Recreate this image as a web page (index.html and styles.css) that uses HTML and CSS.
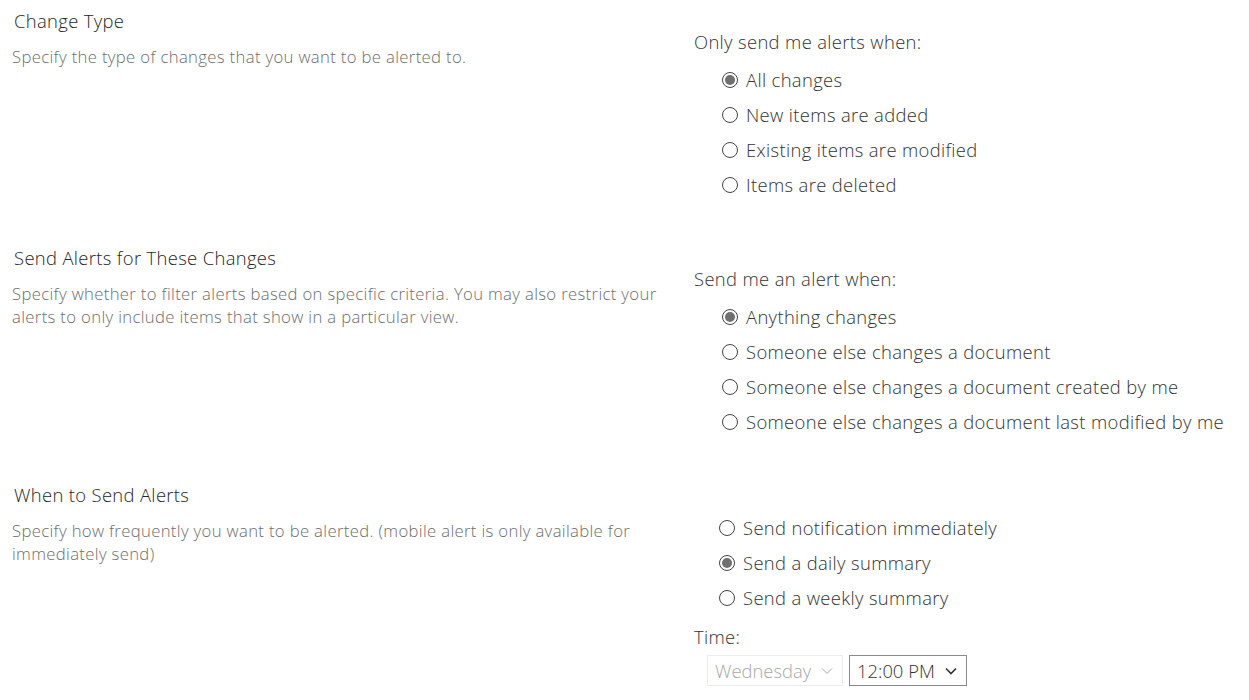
FILE: index.html
```html
<!DOCTYPE html>
<html lang="en">
<head>
<meta charset="utf-8">
<title>Alert settings</title>
<link rel="stylesheet" href="styles.css">
</head>
<body>
<div class="page">
  <section class="section">
    <div class="info">
      <h2 class="title">Change Type</h2>
      <p class="desc">Specify the type of changes that you want to be alerted to.</p>
    </div>
    <div class="control">
      <div class="label">Only send me alerts when:</div>
      <ul class="radios">
        <li class="radio checked"><span class="dot"></span><span>All changes</span></li>
        <li class="radio"><span class="dot"></span><span>New items are added</span></li>
        <li class="radio"><span class="dot"></span><span>Existing items are modified</span></li>
        <li class="radio"><span class="dot"></span><span>Items are deleted</span></li>
      </ul>
    </div>
  </section>

  <section class="section">
    <div class="info">
      <h2 class="title">Send Alerts for These Changes</h2>
      <p class="desc">Specify whether to filter alerts based on specific criteria. You may also restrict your alerts to only include items that show in a particular view.</p>
    </div>
    <div class="control">
      <div class="label">Send me an alert when:</div>
      <ul class="radios">
        <li class="radio checked"><span class="dot"></span><span>Anything changes</span></li>
        <li class="radio"><span class="dot"></span><span>Someone else changes a document</span></li>
        <li class="radio"><span class="dot"></span><span>Someone else changes a document created by me</span></li>
        <li class="radio"><span class="dot"></span><span>Someone else changes a document last modified by me</span></li>
      </ul>
    </div>
  </section>

  <section class="section">
    <div class="info">
      <h2 class="title">When to Send Alerts</h2>
      <p class="desc">Specify how frequently you want to be alerted. (mobile alert is only available for immediately send)</p>
    </div>
    <div class="control control-when">
      <ul class="radios radios-when">
        <li class="radio"><span class="dot"></span><span>Send notification immediately</span></li>
        <li class="radio checked"><span class="dot"></span><span>Send a daily summary</span></li>
        <li class="radio"><span class="dot"></span><span>Send a weekly summary</span></li>
      </ul>
      <div class="label time-label">Time:</div>
      <div class="selects">
        <div class="select disabled">
          <span>Wednesday</span>
          <svg class="chev" width="12" height="8" viewBox="0 0 12 8"><path d="M1 1.5 L6 6.5 L11 1.5" fill="none" stroke="currentColor" stroke-width="1"/></svg>
        </div>
        <div class="select">
          <span>12:00 PM</span>
          <svg class="chev" width="12" height="8" viewBox="0 0 12 8"><path d="M1 1.5 L6 6.5 L11 1.5" fill="none" stroke="currentColor" stroke-width="1.6"/></svg>
        </div>
      </div>
    </div>
  </section>
</div>
</body>
</html>
```

FILE: styles.css
```css
html, body {
  margin: 0;
  padding: 0;
  background: #ffffff;
}

body {
  font-family: "Open Sans", "Noto Sans", sans-serif;
  color: #333333;
}

.page {
  padding: 9px 0 0 12px;
}

.section {
  display: grid;
  grid-template-columns: 682px 1fr;
  margin-bottom: 44px;
}

.info {
  padding-right: 12px;
}

.title {
  margin: 0 0 0 2px;
  font-size: 18.4px;
  font-weight: 300;
  line-height: 24px;
  letter-spacing: 0.35px;
  color: #262626;
}

.desc {
  margin: 12px 0 0 0;
  font-size: 16.7px;
  font-weight: 300;
  line-height: 23px;
  letter-spacing: 0.34px;
  color: #6e6e6e;
}

.control {
  padding-top: 21px;
}

.control-when {
  padding-top: 27px;
}

.label {
  font-size: 18.4px;
  font-weight: 350;
  line-height: 24px;
  letter-spacing: 0.35px;
  color: #333333;
}

.radios {
  list-style: none;
  margin: 8px 0 0 28px;
  padding: 0;
}

.radios-when {
  margin: 0 0 0 25px;
}

.radio {
  display: flex;
  align-items: center;
  height: 35px;
  font-size: 18.4px;
  font-weight: 350;
  letter-spacing: 0.35px;
  color: #333333;
}

.dot {
  box-sizing: border-box;
  width: 16px;
  height: 16px;
  border: 1px solid #444444;
  border-radius: 50%;
  margin-right: 8px;
  flex: none;
  display: flex;
  align-items: center;
  justify-content: center;
}

.checked .dot::after {
  content: "";
  width: 10px;
  height: 10px;
  border-radius: 50%;
  background: #6f6f6f;
}

.time-label {
  margin-top: 10px;
}

.selects {
  display: flex;
  gap: 6px;
  margin: 6px 0 0 13px;
}

.select {
  box-sizing: border-box;
  height: 31px;
  display: flex;
  align-items: center;
  justify-content: space-between;
  gap: 8px;
  padding: 0 9px 0 7px;
  border: 1px solid #8a8a8a;
  font-size: 18.4px;
  font-weight: 350;
  color: #333333;
}

.select.disabled {
  width: 136px;
  border-color: #ececec;
  color: #a8a8a8;
}

.select:not(.disabled) {
  width: 118px;
}

.chev {
  flex: none;
}
```
